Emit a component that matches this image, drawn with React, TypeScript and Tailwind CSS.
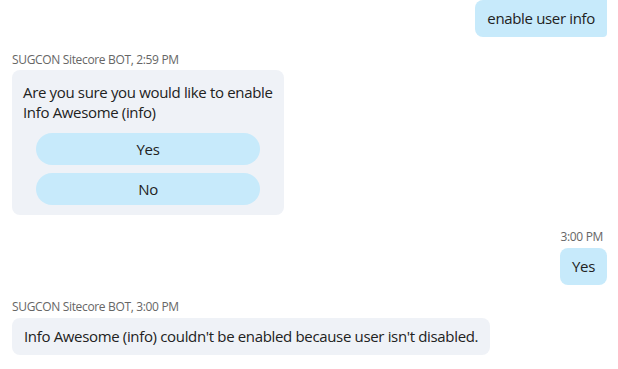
export default function App() {
  const font = { fontFamily: '"Open Sans", "Noto Sans", sans-serif' };

  return (
    <div
      className="w-[618px] h-[369px] bg-white flex flex-col pl-3 pr-[11px] text-[#222] tracking-[-0.34px]"
      style={font}
    >
      {/* user message */}
      <div className="self-end h-[37px] flex items-center px-3 bg-[#c7eafb] rounded-l-lg rounded-br-sm text-[15px]">
        enable user info
      </div>

      {/* bot prompt */}
      <div className="mt-[15px] text-[12px] leading-4 text-[#666]">SUGCON Sitecore BOT, 2:59 PM</div>
      <div className="mt-[2px] w-[272px] bg-[#eff2f7] rounded-lg pt-3 pb-[10px]">
        <p className="pl-[11px] pr-1 text-[15px] leading-5">
          Are you sure you would like to enable Info Awesome (info)
        </p>
        <div className="mt-[11px] mx-6 flex flex-col gap-2">
          <button className="h-8 rounded-full bg-[#c7eafb] text-[15px]">Yes</button>
          <button className="h-8 rounded-full bg-[#c7eafb] text-[15px]">No</button>
        </div>
      </div>

      {/* user reply */}
      <div className="mt-[14px] self-end text-[12px] leading-4 text-[#666] pr-1">3:00 PM</div>
      <div className="mt-[3px] self-end h-[37px] flex items-center px-3 bg-[#c7eafb] rounded-lg text-[15px]">
        Yes
      </div>

      {/* bot answer */}
      <div className="mt-[14px] text-[12px] leading-4 text-[#666]">SUGCON Sitecore BOT, 3:00 PM</div>
      <div className="mt-[3px] self-start h-[37px] flex items-center px-3 bg-[#eff2f7] rounded-lg text-[15px]">
        Info Awesome (info) couldn't be enabled because user isn't disabled.
      </div>
    </div>
  );
}
